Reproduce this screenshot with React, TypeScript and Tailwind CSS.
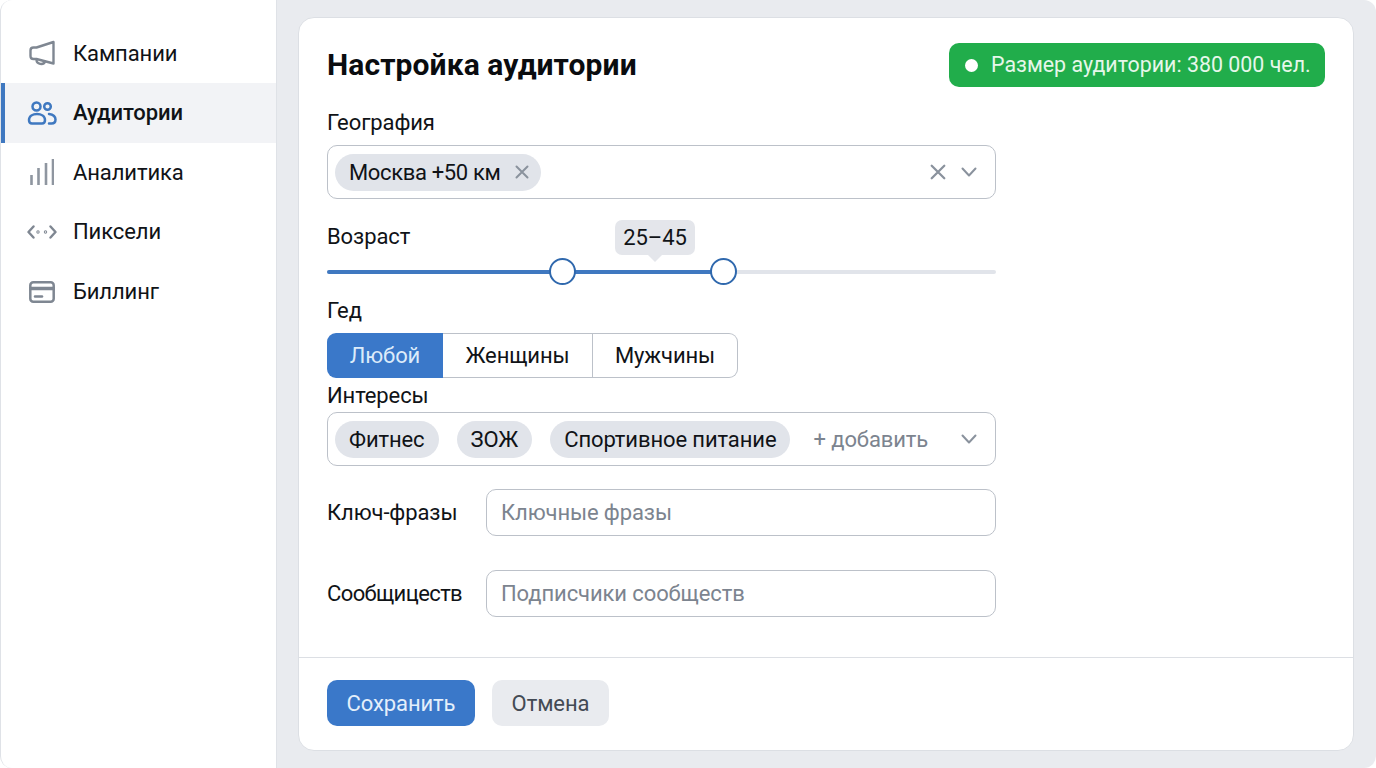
const font = "font-['Roboto','Liberation_Sans',sans-serif]";

const MegaphoneIcon = () => (
  <svg width="26" height="26" viewBox="0 0 26 26" fill="none" stroke="#7f8792" strokeWidth="2.4" strokeLinejoin="round" strokeLinecap="round">
    <path d="M24.5 2 V23.5 L7.5 19 H4.5 C2.6 19 1.5 17.8 1.5 16 V10.5 C1.5 8.7 2.6 7.5 4.5 7.5 H7.5 Z" />
    <path d="M7.5 19.5 C7.5 24.5 14.5 25.5 16 21.5" />
  </svg>
);

const UsersIcon = () => (
  <svg width="30" height="24" viewBox="0 0 30 24" fill="none" stroke="#3f78c0" strokeWidth="2.5" strokeLinecap="round" strokeLinejoin="round">
    <circle cx="9.5" cy="5.5" r="4" />
    <circle cx="20.5" cy="5.5" r="3.3" />
    <path d="M2 19 C2 15 6 13 10 13 C14 13 18 15 18 19 C18 21.5 16.5 22.5 15 22.5 H5 C3 22.5 2 21.5 2 19 Z" />
    <path d="M22 13 C26 13.5 28.5 15.5 28.5 18.5 C28.5 21 27 22.5 24.5 22.5 H22" />
  </svg>
);

const BarsIcon = () => (
  <svg width="24" height="26" viewBox="0 0 24 26" fill="none" stroke="#8f96a0" strokeWidth="2.6">
    <path d="M1.5 26 V16 M8.5 26 V9 M16 26 V4 M23 26 V0" />
  </svg>
);

const CodeIcon = () => (
  <svg width="30" height="14" viewBox="0 0 30 14" fill="none" stroke="#7f8792" strokeWidth="2.4" strokeLinecap="round" strokeLinejoin="round">
    <path d="M6.5 1.5 L1.5 7 L6.5 12.5 M23.5 1.5 L28.5 7 L23.5 12.5" />
    <circle cx="11" cy="7" r="0.5" />
    <circle cx="18.5" cy="7" r="0.5" />
  </svg>
);

const CardIcon = () => (
  <svg width="26" height="22" viewBox="0 0 26 22" fill="none" stroke="#7f8792" strokeWidth="2.5" strokeLinecap="round">
    <rect x="1.3" y="1.3" width="23.4" height="19.4" rx="3" />
    <path d="M1.3 7.5 H24.7" strokeWidth="3.6" />
    <path d="M6 15.5 H13" />
  </svg>
);

const XIcon = ({ size }: { size: number }) => (
  <svg width={size} height={size} viewBox="0 0 14 14" fill="none" stroke="#8a929d" strokeWidth="2" strokeLinecap="round">
    <path d="M1.5 1.5 L12.5 12.5 M12.5 1.5 L1.5 12.5" />
  </svg>
);

const ChevronIcon = () => (
  <svg width="16" height="10" viewBox="0 0 16 10" fill="none" stroke="#8a929d" strokeWidth="2" strokeLinecap="round" strokeLinejoin="round">
    <path d="M1.5 1.5 L8 8.5 L14.5 1.5" />
  </svg>
);

const App = () => {
  const navItems = [
    { label: "Кампании", icon: <MegaphoneIcon /> },
    { label: "Аудитории", icon: <UsersIcon />, active: true },
    { label: "Аналитика", icon: <BarsIcon /> },
    { label: "Пиксели", icon: <CodeIcon /> },
    { label: "Биллинг", icon: <CardIcon /> },
  ];

  return (
    <div className={`${font} flex h-[768px] w-[1376px] overflow-hidden rounded-[12px] border-l border-[#dfe2e7] bg-[#e9ebef] text-[22px] tracking-[-0.1px] text-[#101317]`}>
      {/* Sidebar */}
      <aside className="w-[276px] shrink-0 border-r border-[#dfe2e7] bg-white pt-[23.4px]">
        {navItems.map((item) => (
          <div
            key={item.label}
            className={`flex h-[59.6px] items-center border-l-[4px] ${
              item.active ? "border-[#3f78c0] bg-[#f2f3f6] font-medium" : "border-transparent"
            }`}
          >
            <div className="flex w-[68px] shrink-0 items-center justify-center pl-[6px]">{item.icon}</div>
            <span>{item.label}</span>
          </div>
        ))}
      </aside>

      {/* Main */}
      <main className="flex-1 pt-[17px] pr-[22px] pb-[17px] pl-[21px]">
        <div className="flex h-[734px] flex-col rounded-[16px] border border-[#dcdfe4] bg-white">
          <div className="flex-1 px-[28px] pt-[25px]">
            <div className="flex items-center justify-between">
              <h1 className="text-[30px] leading-[44px] font-bold tracking-[0.1px] text-[#0a0c0f]">Настройка аудитории</h1>
              <div className="flex h-[44px] w-[376px] items-center gap-[13px] rounded-[10px] bg-[#21ad4b] pl-[16px] text-[21.4px] tracking-normal text-[#e6f7ea]">
                <span className="h-[13px] w-[13px] rounded-full bg-white" />
                Размер аудитории: 380 000 чел.
              </div>
            </div>

            <div className="w-[669px]">
              <div className="mt-[18px] leading-[36px]">География</div>
              <div className="mt-[4px] flex h-[54px] items-center rounded-[10px] border border-[#bcc1c9] pr-[18px] pl-[7px]">
                <span className="flex h-[37px] items-center gap-[14px] rounded-full bg-[#e1e4ea] pr-[12px] pl-[14px] tracking-[-0.35px]">
                  Москва +50 км
                  <XIcon size={14} />
                </span>
                <div className="ml-auto flex items-center gap-[15px]">
                  <XIcon size={16} />
                  <ChevronIcon />
                </div>
              </div>

              {/* Age slider */}
              <div className="relative mt-[20px] h-[56px]">
                <div className="leading-[36px]">Возраст</div>
                <div className="absolute top-[1px] left-[288px] flex h-[35px] w-[80px] items-center justify-center rounded-[7px] bg-[#e4e6eb]">
                  25–45
                </div>
                <div className="absolute top-[36px] left-[321px] h-0 w-0 border-x-[7px] border-t-[7px] border-x-transparent border-t-[#e4e6eb]" />
                <div className="absolute top-[51px] left-0 h-[4px] w-full rounded-full bg-[#e1e4ea]" />
                <div className="absolute top-[51px] left-0 h-[4px] w-[397px] rounded-full bg-[#3f78c0]" />
                <div className="absolute top-[39px] left-[222px] h-[27px] w-[27px] rounded-full border-2 border-[#2f68ad] bg-white" />
                <div className="absolute top-[39px] left-[383px] h-[27px] w-[27px] rounded-full border-2 border-[#2f68ad] bg-white" />
              </div>

              <div className="mt-[18px] leading-[36px]">Гед</div>
              <div className="mt-[4px] flex h-[45px] w-[411px]">
                <div className="flex w-[116px] items-center justify-center rounded-l-[9px] bg-[#3a78c9] text-[#dcebfa]">Любой</div>
                <div className="flex w-[150px] items-center justify-center border-y border-r border-[#bcc1c9]">Женщины</div>
                <div className="flex flex-1 items-center justify-center rounded-r-[9px] border-y border-r border-[#bcc1c9]">Мужчины</div>
              </div>

              <div className="-mb-[2px] leading-[36px]">Интересы</div>
              <div className="flex h-[54px] items-center rounded-[10px] border border-[#bcc1c9] pr-[18px] pl-[7px]">
                <span className="flex h-[37px] items-center rounded-full bg-[#e1e4ea] px-[14px]">Фитнес</span>
                <span className="ml-[18px] flex h-[37px] items-center rounded-full bg-[#e1e4ea] px-[14px]">ЗОЖ</span>
                <span className="ml-[18px] flex h-[37px] items-center rounded-full bg-[#e1e4ea] px-[14px]">Спортивное питание</span>
                <span className="ml-[23px] text-[#7c848f]">+ добавить</span>
                <div className="ml-auto">
                  <ChevronIcon />
                </div>
              </div>

              <div className="mt-[23px] flex items-center">
                <label className="w-[159px] shrink-0">Ключ-фразы</label>
                <input
                  placeholder="Ключные фразы"
                  className="h-[47px] flex-1 rounded-[10px] border border-[#bcc1c9] px-[14px] outline-none placeholder:text-[#7c848f]"
                />
              </div>
              <div className="mt-[34px] flex items-center">
                <label className="w-[159px] shrink-0 tracking-[-0.6px]">Сообщицеств</label>
                <input
                  placeholder="Подписчики сообществ"
                  className="h-[47px] flex-1 rounded-[10px] border border-[#bcc1c9] px-[14px] outline-none placeholder:text-[#7c848f]"
                />
              </div>
            </div>
          </div>

          {/* Footer */}
          <div className="flex h-[93px] items-start gap-[17px] border-t border-[#dcdfe4] px-[28px] pt-[22px]">
            <button className="h-[46px] w-[148px] rounded-[10px] bg-[#3a78c9] text-[#e3effb]">Сохранить</button>
            <button className="h-[46px] w-[117px] rounded-[10px] bg-[#e9ebef] text-[#434a54]">Отмена</button>
          </div>
        </div>
      </main>
    </div>
  );
};

export default App;
